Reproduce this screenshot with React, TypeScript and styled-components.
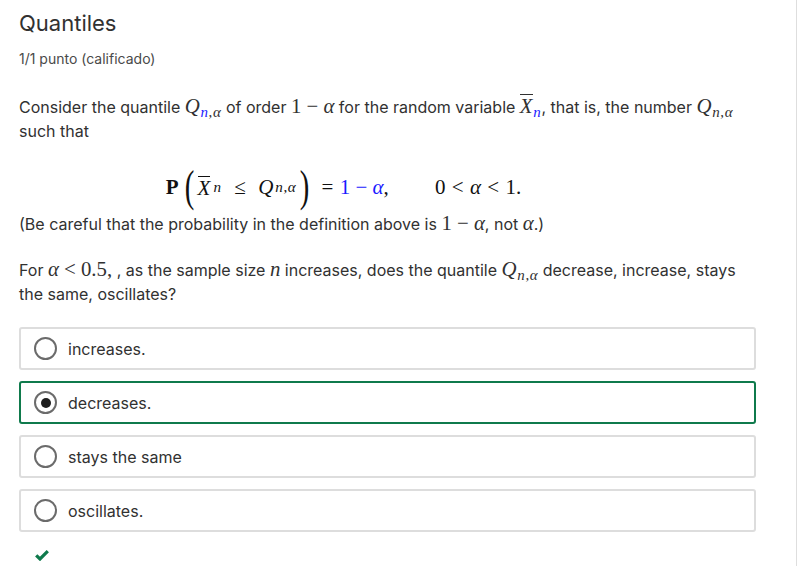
import React from "react";
import styled, { createGlobalStyle } from "styled-components";

const Global = createGlobalStyle`
  html, body { margin: 0; padding: 0; background: #fff; }
  body { font-family: Inter, "Open Sans", sans-serif; color: #313131; }
`;

const Page = styled.div`
  box-sizing: border-box;
  width: 797px;
  min-height: 566px;
  border-right: 1px solid #dedede;
  padding: 10px 0 0 19px;
`;

const Title = styled.h2`
  margin: 0;
  font-size: 22px;
  line-height: 26px;
  font-weight: 400;
  color: #313131;
`;

const Meta = styled.div`
  margin-top: 13px;
  font-size: 14px;
  line-height: 20px;
  color: #4a4a4a;
`;

const Para = styled.p<{ $top: number }>`
  margin: ${(p) => p.$top}px 0 0;
  font-size: 16px;
  line-height: 24px;
  color: #313131;
  width: 740px;
`;

const Display = styled.div`
  margin-top: 24px;
  height: 40px;
  display: flex;
  align-items: center;
  justify-content: center;
  padding-right: 128px;
  font-family: "Liberation Serif", "DejaVu Serif", serif;
  font-size: 21px;
  color: #111;
  white-space: nowrap;
`;

const M = styled.span`
  font-family: "Liberation Serif", "DejaVu Serif", serif;
  font-size: 1.3em;
  line-height: 1;
  white-space: nowrap;
`;

const I = styled.i<{ $blue?: boolean }>`
  font-style: italic;
  color: ${(p) => (p.$blue ? "#1a1aff" : "inherit")};
`;

const Up = styled.span<{ $blue?: boolean }>`
  color: ${(p) => (p.$blue ? "#1a1aff" : "inherit")};
`;

const Sub = styled.sub<{ $pad?: number }>`
  font-size: 0.72em;
  vertical-align: -0.25em;
  line-height: 0;
  letter-spacing: 0.04em;
  padding-left: ${(p) => p.$pad ?? 0.05}em;
`;

const Bar = styled.span`
  display: inline-block;
  border-top: 1px solid currentColor;
  line-height: 1;
  padding-top: 1px;
`;

const Op = styled.span<{ $gap?: number }>`
  padding: 0 ${(p) => p.$gap ?? 0.25}em;
`;

const Bold = styled.b`
  font-weight: 700;
  font-style: normal;
`;

const Paren = styled.span<{ $close?: boolean }>`
  font-size: 1.9em;
  line-height: 1;
  font-weight: 400;
  display: inline-block;
  transform: scale(0.72, 1.12);
  margin: ${(p) => (p.$close ? "0 0.1em 0 0.04em" : "0 0.02em 0 0.12em")};
  position: relative;
  top: -1px;
`;

const Options = styled.div`
  margin-top: 21px;
  display: flex;
  flex-direction: column;
  gap: 11px;
  width: 737px;
`;

const Option = styled.label<{ $selected?: boolean }>`
  box-sizing: border-box;
  height: 43px;
  display: flex;
  align-items: center;
  gap: 11px;
  padding-left: 13px;
  border: 2px solid ${(p) => (p.$selected ? "#0f7a4c" : "#dddddd")};
  border-radius: 3px;
  font-size: 16px;
  color: #313131;
`;

const Radio = styled.span<{ $checked?: boolean }>`
  box-sizing: border-box;
  width: 23px;
  height: 23px;
  border-radius: 50%;
  border: 2px solid #6b6b6b;
  display: flex;
  align-items: center;
  justify-content: center;
  &::after {
    content: "";
    display: ${(p) => (p.$checked ? "block" : "none")};
    width: 10px;
    height: 10px;
    border-radius: 50%;
    background: #1e1e1e;
  }
`;

const Status = styled.div`
  margin: 16px 0 0 16px;
  height: 14px;
  display: flex;
  align-items: center;
`;

const Q = ({ blueN }: { blueN?: boolean }) => (
  <>
    <I>Q</I>
    <Sub>
      <I $blue={blueN}>n</I>,<I>α</I>
    </Sub>
  </>
);

const opts = ["increases.", "decreases.", "stays the same", "oscillates."];

export default function App() {
  return (
    <>
      <Global />
      <Page>
        <Title>Quantiles</Title>
        <Meta>1/1 punto (calificado)</Meta>
        <Para $top={25}>
          Consider the quantile{" "}
          <M>
            <Q blueN />
          </M>{" "}
          of order{" "}
          <M>
            1<Op>−</Op>
            <I>α</I>
          </M>{" "}
          for the random variable{" "}
          <M>
            <Bar>
              <I>X</I>
            </Bar>
            <Sub>
              <I $blue>n</I>
            </Sub>
          </M>
          , that is, the number{" "}
          <M>
            <Q />
          </M>
          <br />
          such that
        </Para>
        <Display>
          <Bold>P</Bold>
          <Paren>(</Paren>
          <Bar>
            <I>X</I>
          </Bar>
          <Sub $pad={0.2}>
            <I>n</I>
          </Sub>
          <Op $gap={0.6}>≤</Op>
          <I>Q</I>
          <Sub $pad={0.12}>
            <I>n</I>,<I>α</I>
          </Sub>
          <Paren $close>)</Paren>
          <Op $gap={0.3}>=</Op>
          <Up $blue>1</Up>
          <Op $gap={0.25}>
            <Up $blue>−</Up>
          </Op>
          <I $blue>α</I>,<Op $gap={1.1}> </Op>0<Op $gap={0.3}>&lt;</Op>
          <I>α</I>
          <Op $gap={0.3}>&lt;</Op>1.
        </Display>
        <Para $top={5}>
          (Be careful that the probability in the definition above is{" "}
          <M>
            1<Op>−</Op>
            <I>α</I>
          </M>
          , not{" "}
          <M>
            <I>α</I>
          </M>
          .)
        </Para>
        <Para $top={22}>
          For{" "}
          <M>
            <I>α</I>
            <Op>&lt;</Op>0.5,
          </M>{" "}
          , as the sample size{" "}
          <M>
            <I>n</I>
          </M>{" "}
          increases, does the quantile{" "}
          <M>
            <Q />
          </M>{" "}
          decrease, increase, stays the same, oscillates?
        </Para>
        <Options>
          {opts.map((o, i) => (
            <Option key={o} $selected={i === 1}>
              <Radio $checked={i === 1} />
              {o}
            </Option>
          ))}
        </Options>
        <Status>
          <svg width="14" height="12" viewBox="0 0 14 12">
            <path
              d="M1.2 6.3 L5 10 L12.8 2.2"
              fill="none"
              stroke="#0f7a4c"
              strokeWidth="3.2"
            />
          </svg>
        </Status>
      </Page>
    </>
  );
}
